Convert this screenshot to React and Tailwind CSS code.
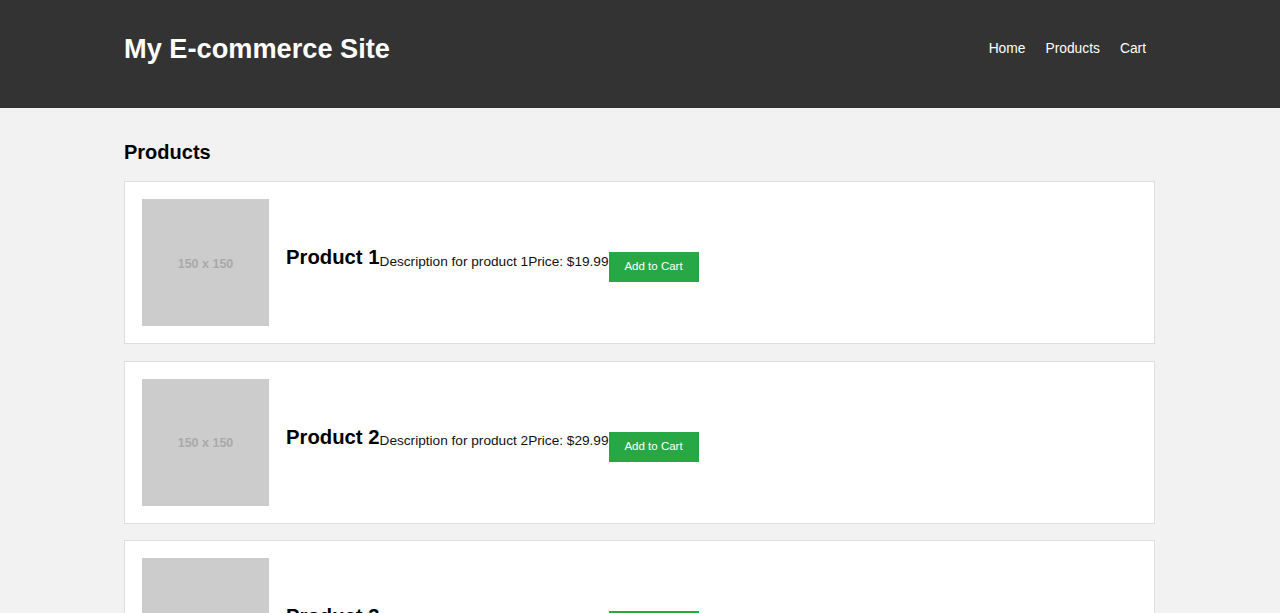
import React from 'react';

const products = [
  { id: 1, name: 'Product 1', price: '19.99' },
  { id: 2, name: 'Product 2', price: '29.99' },
  { id: 3, name: 'Product 3', price: '39.99' },
];

const ProductCard = ({ product }) => (
  <div className="flex items-center bg-white border border-[#dedede] p-[17px] mb-[16.5px]">
    <div className="w-[127px] h-[127px] shrink-0 bg-[#cccccc] flex items-center justify-center pt-[3px]">
      <span className="text-[12.5px] font-bold text-[#a9a9a9]">150 x 150</span>
    </div>
    <h3 className="ml-[17px] mb-[10px] text-[20.3px] font-bold text-black leading-[23px]">{product.name}</h3>
    <p className="mb-[2px] text-[13.65px] text-[#111] leading-[16px]">Description for product {product.id}</p>
    <p className="mb-[2px] text-[13.65px] text-[#111] leading-[16px]">Price: ${product.price}</p>
    <button className="mt-[9px] w-[90px] h-[30px] bg-[#28a745] text-white text-[11.5px]">
      Add to Cart
    </button>
  </div>
);

const App = () => {
  return (
    <div className="min-h-screen bg-[#f2f2f2]" style={{ fontFamily: '"Liberation Sans", Arial, sans-serif' }}>
      <header className="bg-[#333333] h-[108px]">
        <div className="w-[1031px] ml-[124px] h-full flex items-center justify-between">
          <h1 className="text-[27.2px] font-bold text-white leading-none mb-[10px]">My E-commerce Site</h1>
          <nav className="flex items-center gap-[20px] pr-[9px] mb-[10px]">
            <a href="#" className="text-[13.8px] text-white">Home</a>
            <a href="#" className="text-[13.8px] text-white">Products</a>
            <a href="#" className="text-[13.8px] text-white">Cart</a>
          </nav>
        </div>
      </header>
      <main className="w-[1031px] ml-[124px] pt-[33px]">
        <h2 className="text-[20px] font-bold text-black leading-[23px] mb-[17px]">Products</h2>
        {products.map((p) => (
          <ProductCard key={p.id} product={p} />
        ))}
      </main>
    </div>
  );
};

export default App;
